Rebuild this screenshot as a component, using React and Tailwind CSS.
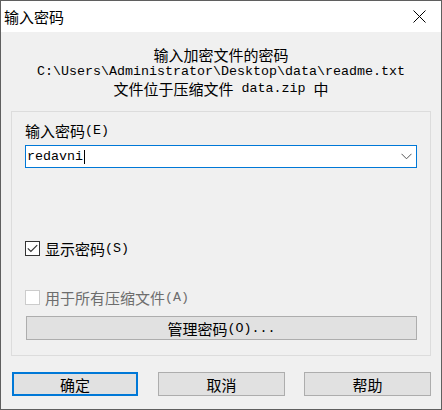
import React from "react";

const CJK_RE = /([\u3000-\u9fff\uff00-\uffef]+)/;

function T({ text }) {
  const parts = text.split(CJK_RE).filter((p) => p.length > 0);
  return (
    <>
      {parts.map((p, i) =>
        CJK_RE.test(p) ? (
          <span key={i} className="font-['Noto_Sans_CJK_SC',sans-serif] text-[15px]">
            {p}
          </span>
        ) : (
          <span key={i} className="font-['Liberation_Mono',monospace] text-[13.33px] whitespace-pre">
            {p}
          </span>
        )
      )}
    </>
  );
}

export default function App() {
  return (
    <div className="w-[442px] h-[410px] border border-[#5f5f5f] bg-[#f0f0f0] flex flex-col text-black overflow-hidden">
      {/* Title bar */}
      <div className="h-[31px] bg-white flex items-center justify-between shrink-0">
        <div className="pl-[3px] font-['Noto_Sans_CJK_SC',sans-serif] text-[15px] leading-[17px]">输入密码</div>
        <div className="w-[46px] h-[31px] flex items-center justify-center mr-[-1px]">
          <svg width="13" height="13" viewBox="0 0 13 13">
            <path d="M0.5 0.5 L12.5 12.5 M12.5 0.5 L0.5 12.5" stroke="#000" strokeWidth="1" fill="none" />
          </svg>
        </div>
      </div>

      {/* Header text */}
      <div className="pt-[14px] flex flex-col items-center leading-[17px]">
        <div className="h-[17px] flex items-center"><T text="输入加密文件的密码" /></div>
        <div className="h-[17px] flex items-center"><T text={"C:\\Users\\Administrator\\Desktop\\data\\readme.txt"} /></div>
        <div className="h-[17px] flex items-center"><T text="文件位于压缩文件 data.zip 中" /></div>
      </div>

      {/* Group box */}
      <div className="mt-[14px] mx-[10px] h-[245px] border border-[#dcdcdc] px-[13px] pt-[10px] flex flex-col">
        <div className="h-[17px] flex items-center leading-[17px]"><T text="输入密码(E)" /></div>
        <div className="mt-[6px] h-[23px] border border-[#0078d7] bg-white flex items-center justify-between pl-[1px] pr-[4px]">
          <div className="flex items-center leading-[17px]">
            <T text="redavni" />
            <span className="w-px h-[14px] bg-black ml-[1px]"></span>
          </div>
          <svg width="11" height="7" viewBox="0 0 11 7">
            <path d="M0.5 0.8 L5.5 5.8 L10.5 0.8" stroke="#555" strokeWidth="1" fill="none" />
          </svg>
        </div>

        <div className="mt-[72px] h-[17px] flex items-center gap-[5px] leading-[17px]">
          <div className="w-[15px] h-[15px] border border-[#333] bg-white flex items-center justify-center">
            <svg width="11" height="9" viewBox="0 0 11 9">
              <path d="M0.8 4.3 L3.9 7.4 L10.2 1.1" stroke="#333" strokeWidth="1.2" fill="none" />
            </svg>
          </div>
          <div className="flex items-center"><T text="显示密码(S)" /></div>
        </div>

        <div className="mt-[32px] h-[17px] flex items-center gap-[5px] leading-[17px] text-[#6d6d6d]">
          <div className="w-[15px] h-[15px] border border-[#cccccc] bg-white"></div>
          <div className="flex items-center"><T text="用于所有压缩文件(A)" /></div>
        </div>

        <div className="mt-[10px] ml-[1px] h-[24px] border border-[#adadad] bg-[#e1e1e1] flex items-center justify-center leading-[17px]">
          <T text="管理密码(O)..." />
        </div>
      </div>

      {/* Bottom buttons */}
      <div className="mt-[16px] pl-[11px] pr-[10px] flex items-center">
        <div className="w-[126px] h-[24px] border-2 border-[#0078d7] bg-[#e1e1e1] flex items-center justify-center font-['Noto_Sans_CJK_SC',sans-serif] text-[15px] leading-[17px]">
          确定
        </div>
        <div className="ml-[20px] w-[127px] h-[24px] border border-[#adadad] bg-[#e1e1e1] flex items-center justify-center font-['Noto_Sans_CJK_SC',sans-serif] text-[15px] leading-[17px]">
          取消
        </div>
        <div className="ml-[19px] w-[127px] h-[24px] border border-[#adadad] bg-[#e1e1e1] flex items-center justify-center font-['Noto_Sans_CJK_SC',sans-serif] text-[15px] leading-[17px]">
          帮助
        </div>
      </div>
    </div>
  );
}
